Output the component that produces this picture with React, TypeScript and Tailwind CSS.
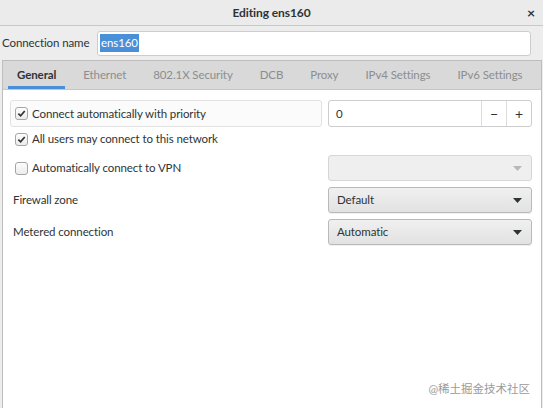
import React from 'react';

const Check: React.FC<{ checked?: boolean }> = ({ checked }) => (
  <span className="flex h-[13px] w-[13px] shrink-0 items-center justify-center rounded-[3px] border border-[#a6a6a6] bg-gradient-to-b from-[#fdfdfd] to-[#ececec]">
    {checked && (
      <svg width="9" height="9" viewBox="0 0 10 10">
        <path d="M1.5 5.2 L4 7.6 L8.6 2.2" fill="none" stroke="#2e3436" strokeWidth="1.9" />
      </svg>
    )}
  </span>
);

const Arrow: React.FC<{ color?: string }> = ({ color = '#2e3436' }) => (
  <svg width="9" height="5" viewBox="0 0 9 5">
    <path d="M0 0 H9 L4.5 5 Z" fill={color} />
  </svg>
);

const Combo: React.FC<{ value?: string; disabled?: boolean }> = ({ value, disabled }) => (
  <div
    className={
      disabled
        ? 'flex h-[26px] items-center justify-between rounded-[3px] border border-[#d6d6d6] bg-[#efefef] px-[8px]'
        : 'flex h-[26px] items-center justify-between rounded-[3px] border border-[#b9b9b9] bg-gradient-to-b from-[#f0f0f0] to-[#e2e2e2] px-[8px] shadow-[0_1px_0_rgba(0,0,0,0.06)]'
    }
  >
    <span className="text-[#2e3436]">{value}</span>
    <span className="mr-[1px]">
      <Arrow color={disabled ? '#b8b8b8' : '#2e3436'} />
    </span>
  </div>
);

const tabs = ['General', 'Ethernet', '802.1X Security', 'DCB', 'Proxy', 'IPv4 Settings', 'IPv6 Settings'];

export default function App() {
  return (
    <div className="relative flex h-[408px] w-[543px] flex-col overflow-hidden whitespace-nowrap bg-[#ededed] text-[11.5px] tracking-[-0.1px] text-[#2e3436] [font-family:Lato,sans-serif]">
      {/* header bar */}
      <div className="grid h-[26px] shrink-0 grid-cols-[1fr_auto_1fr] items-center border-b border-[#c8c8c8] bg-[#ebebeb]">
        <div />
        <div className="text-[12px] font-bold text-[#2e3436]">Editing ens160</div>
        <div className="flex justify-end pr-[8px] text-[14px] font-bold leading-none">×</div>
      </div>

      {/* connection name */}
      <div className="flex h-[34px] shrink-0 items-center pl-[2px] pr-[12px]">
        <span className="w-[95px] shrink-0">Connection name</span>
        <div className="flex h-[25px] flex-1 items-center rounded-[3px] border border-[#cdcdcd] bg-white px-[2px]">
          <span className="bg-[#4a90d9] px-[1px] text-white">ens160</span>
        </div>
      </div>

      {/* notebook */}
      <div className="ml-[2px] mr-[1px] flex flex-1 flex-col border-x border-t border-[#bdbdbd] bg-white">
        <div className="flex h-[29px] shrink-0 items-stretch gap-[9px] border-b border-[#c6c6c6] bg-[#d9d9d9] pl-[5px]">
          {tabs.map((t, i) => (
            <div
              key={t}
              className={
                i === 0
                  ? 'flex items-center border-b-[3px] border-[#4a90d9] px-[9px] pt-[3px] font-bold text-[#2e3436]'
                  : 'flex items-center px-[9px] text-[#8b8e8f]'
              }
            >
              {t}
            </div>
          ))}
        </div>

        <div className="flex flex-col pl-[7px] pr-[9px] pt-[10px]">
          <div className="grid grid-cols-[1fr_204px] gap-[6px]">
            <div className="flex h-[27px] items-center gap-[4px] rounded-[3px] border border-[#e2e2e2] bg-[#fbfbfb] px-[4px]">
              <Check checked />
              <span>Connect automatically with priority</span>
            </div>
            <div className="flex h-[27px] items-stretch rounded-[3px] border border-[#cdcdcd] bg-white">
              <span className="flex flex-1 items-center pl-[7px]">0</span>
              <span className="flex w-[25px] items-center justify-center border-l border-[#dcdcdc] text-[14px]">−</span>
              <span className="flex w-[25px] items-center justify-center border-l border-[#dcdcdc] text-[14px]">+</span>
            </div>
          </div>

          <div className="flex h-[24px] items-center gap-[4px] px-[5px]">
            <Check checked />
            <span>All users may connect to this network</span>
          </div>

          <div className="mt-[4px] grid grid-cols-[1fr_204px] gap-[6px]">
            <div className="flex items-center gap-[4px] px-[5px]">
              <Check />
              <span>Automatically connect to VPN</span>
            </div>
            <Combo disabled />
          </div>

          <div className="mt-[6px] grid grid-cols-[1fr_204px] gap-[6px]">
            <span className="flex items-center pl-[3px]">Firewall zone</span>
            <Combo value="Default" />
          </div>

          <div className="mt-[6px] grid grid-cols-[1fr_204px] gap-[6px]">
            <span className="flex items-center pl-[3px]">Metered connection</span>
            <Combo value="Automatic" />
          </div>
        </div>
      </div>

      <div className="absolute bottom-[11px] right-[13px] text-[11.5px] tracking-normal text-[#9a9a9a] [font-family:Lato,'Noto_Sans_CJK_SC',sans-serif]">
        @稀土掘金技术社区
      </div>
    </div>
  );
}
